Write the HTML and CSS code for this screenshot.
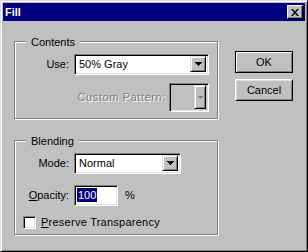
FILE: index.html
```html
<!DOCTYPE html>
<html>
<head>
<meta charset="utf-8">
<link rel="stylesheet" href="styles.css">
</head>
<body>
<div class="window">
  <div class="titlebar">
    <span class="title">Fill</span>
    <span class="close"><svg width="8" height="7" viewBox="0 0 8 7"><path d="M0 0h2l2 2.4 2-2.4h2l-3 3.5 3 3.5h-2l-2-2.4-2 2.4h-2l3-3.5z" fill="#000"/></svg></span>
  </div>
  <div class="body">
    <div class="left">
      <div class="group contents">
        <div class="legend">Contents</div>
        <div class="row first">
          <span class="lbl">Use:</span>
          <div class="combo use">
            <span class="val">50% Gray</span>
            <span class="drop"><svg width="7" height="4" viewBox="0 0 7 4" shape-rendering="crispEdges"><rect x="0" y="0" width="7" height="1"/><rect x="1" y="1" width="5" height="1"/><rect x="2" y="2" width="3" height="1"/><rect x="3" y="3" width="1" height="1"/></svg></span>
          </div>
        </div>
        <div class="row pattern-row">
          <span class="disabled">Custom Pattern:</span>
          <div class="pattern">
            <span class="pdrop"><svg width="5" height="3" viewBox="0 0 5 3" shape-rendering="crispEdges" fill="#808080"><rect x="0" y="0" width="5" height="1"/><rect x="1" y="1" width="3" height="1"/><rect x="2" y="2" width="1" height="1"/></svg></span>
          </div>
        </div>
      </div>
      <div class="group blending">
        <div class="legend">Blending</div>
        <div class="row first">
          <span class="lbl">Mode:</span>
          <div class="combo mode">
            <span class="val">Normal</span>
            <span class="drop"><svg width="7" height="4" viewBox="0 0 7 4" shape-rendering="crispEdges"><rect x="0" y="0" width="7" height="1"/><rect x="1" y="1" width="5" height="1"/><rect x="2" y="2" width="3" height="1"/><rect x="3" y="3" width="1" height="1"/></svg></span>
          </div>
        </div>
        <div class="row opacity-row">
          <span class="lbl"><u>O</u>pacity:</span>
          <div class="field"><span class="sel">100</span></div>
          <span class="pct">%</span>
        </div>
        <div class="row check-row">
          <span class="checkbox"></span>
          <span class="check-label"><u>P</u>reserve Transparency</span>
        </div>
      </div>
    </div>
    <div class="buttons">
      <button class="btn default">OK</button>
      <button class="btn">Cancel</button>
    </div>
  </div>
</div>
</body>
</html>
```

FILE: styles.css
```css
* { box-sizing: border-box; }
html, body { margin: 0; padding: 0; }
body {
  width: 308px;
  height: 252px;
  overflow: hidden;
  background: #c0c0c0;
  font-family: "Liberation Sans", Arial, sans-serif;
  font-size: 11px;
  color: #000;
}
.window {
  width: 308px;
  height: 252px;
  background: #c0c0c0;
  border: 1px solid;
  border-color: #dfdfdf #000 #000 #dfdfdf;
  box-shadow: inset 1px 1px #fff, inset -1px -1px #808080;
  padding: 2px;
}
.titlebar {
  height: 18px;
  background: #000080;
  color: #fff;
  font-weight: bold;
  display: flex;
  align-items: center;
  justify-content: space-between;
  padding: 0 2px;
}
.title { line-height: 13px; }
.close {
  width: 16px;
  height: 14px;
  background: #c0c0c0;
  border: 1px solid;
  border-color: #fff #000 #000 #fff;
  box-shadow: inset -1px -1px #808080;
  display: flex;
  align-items: center;
  justify-content: center;
}
.body {
  display: flex;
  gap: 17px;
  padding: 20px 0 0 11px;
}
.left {
  width: 204px;
  display: flex;
  flex-direction: column;
  gap: 21px;
}
.group {
  border: 1px solid #808080;
  box-shadow: inset 1px 1px #fff, 1px 1px #fff;
}
.contents { height: 78px; }
.blending { height: 95px; }
.legend {
  width: fit-content;
  margin: -6px 0 0 11px;
  padding: 0 5px;
  background: #c0c0c0;
  line-height: 13px;
}
.row {
  display: flex;
  align-items: center;
  line-height: 13px;
}
.row.first { margin-top: 5px; }
.lbl {
  width: 54px;
  margin-right: 5px;
  text-align: right;
}
.combo, .field, .pattern, .checkbox {
  border: 1px solid;
  border-color: #808080 #fff #fff #808080;
  box-shadow: inset 1px 1px #000, inset -1px -1px #dfdfdf;
}
.combo {
  height: 21px;
  background: #fff;
  padding: 1px 2px 2px 1px;
  display: flex;
  align-items: stretch;
}
.combo.use { width: 135px; }
.combo.mode { width: 107px; }
.val {
  flex: 1;
  padding-left: 3px;
  display: flex;
  align-items: center;
}
.drop, .pdrop {
  width: 16px;
  background: #c0c0c0;
  border: 1px solid;
  border-color: #dfdfdf #000 #000 #dfdfdf;
  box-shadow: inset 1px 1px #fff, inset -1px -1px #808080;
  display: flex;
  align-items: center;
  justify-content: center;
}
.pattern-row {
  margin-top: 8px;
  justify-content: flex-end;
  padding-right: 8px;
}
.disabled {
  color: #808080;
  text-shadow: 1px 1px #fff;
  margin-right: 3px;
  letter-spacing: 0.6px;
}
.pattern {
  width: 40px;
  height: 29px;
  background: #c0c0c0;
  padding: 1px 2px 2px 1px;
  display: flex;
  justify-content: flex-end;
}
.pdrop {
  width: 12px;
  padding-top: 1px;
}
.opacity-row { margin-top: 11px; }
.field {
  width: 44px;
  height: 21px;
  background: #fff;
  padding: 1px 2px 2px 2px;
  display: flex;
  align-items: center;
}
.sel {
  background: #000080;
  color: #fff;
  line-height: 14px;
  padding: 0 1px;
}
.pct { margin-left: 7px; }
.check-row {
  margin-top: 10px;
  padding-left: 8px;
}
.checkbox {
  width: 13px;
  height: 13px;
  background: #fff;
}
.check-label { margin-left: 5px; letter-spacing: 0.25px; }
.buttons {
  padding-top: 10px;
  display: flex;
  flex-direction: column;
  gap: 6px;
}
.btn {
  width: 58px;
  height: 22px;
  margin: 0;
  padding: 0;
  font-family: "Liberation Sans", Arial, sans-serif;
  font-size: 11px;
  color: #000;
  background: #c0c0c0;
  border: 1px solid;
  border-color: #fff #000 #000 #fff;
  box-shadow: inset 1px 1px #dfdfdf, inset -1px -1px #808080;
}
.btn.default {
  border-color: #000;
  box-shadow: inset 1px 1px #fff, inset -1px -1px #808080;
}
```
